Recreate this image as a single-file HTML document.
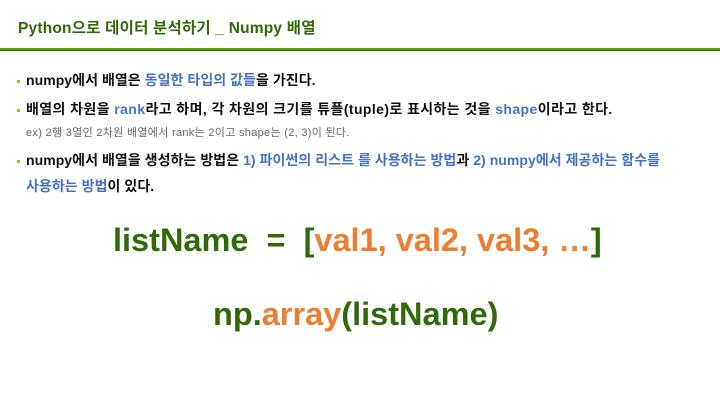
<!DOCTYPE html>
<html><head><meta charset="utf-8"><style>
body{margin:0;width:720px;height:405px;background:#fff;position:relative;overflow:hidden;font-family:"Liberation Sans","Noto Sans CJK KR",sans-serif;}
.t{position:absolute;white-space:nowrap;font-weight:bold;}
.b{color:#4472c4}.o{color:#ed7d31}.g{color:#2e6b08}
.dot{position:absolute;width:3px;height:3px;background:#8dc21f;}
.m{font-size:14px;letter-spacing:0.05px;color:#111}
</style></head><body>
<div class="t g" style="left:18px;top:16px;font-size:15.5px;letter-spacing:0.2px">Python으로 데이터 분석하기 _ Numpy 배열</div>
<div style="position:absolute;left:0;top:48px;width:720px;height:2px;background:#5f9e00"></div>
<div style="position:absolute;left:0;top:50px;width:720px;height:1px;background:#2e6b08"></div>
<div class="dot" style="left:17px;top:80px"></div>
<div class="t m" style="left:26px;top:70px;">numpy에서 배열은 <span class="b">동일한 타입의 값들</span>을 가진다.</div>
<div class="dot" style="left:17px;top:109px"></div>
<div class="t m" style="left:26px;top:99px;letter-spacing:0.4px">배열의 차원을 <span class="b">rank</span>라고 하며, 각 차원의 크기를 튜플(tuple)로 표시하는 것을 <span class="b">shape</span>이라고 한다.</div>
<div class="t" style="left:26px;top:124px;font-size:11px;color:#666;font-weight:normal;letter-spacing:0.3px">ex) 2행 3열인 2차원 배열에서 rank는 2이고 shape는 (2, 3)이 된다.</div>
<div class="dot" style="left:17px;top:160px"></div>
<div class="t m" style="left:26px;top:150px;">numpy에서 배열을 생성하는 방법은 <span class="b">1) 파이썬의 리스트 를 사용하는 방법</span>과 <span class="b">2) numpy에서 제공하는 함수를</span></div>
<div class="t m" style="left:26px;top:176px;"><span class="b">사용하는 방법</span>이 있다.</div>
<div class="t g" style="left:113px;top:222px;font-size:32.5px;">listName&nbsp; =&nbsp; [<span class="o">val1, val2, val3, …</span>]</div>
<div class="t g" style="left:213px;top:296px;font-size:32.5px;">np.<span class="o">array</span>(listName)</div>
</body></html>
